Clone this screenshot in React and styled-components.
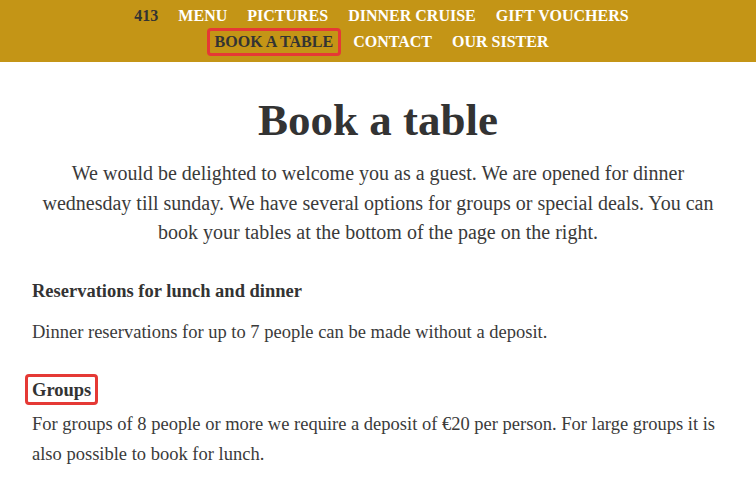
import React from "react";
import styled, { createGlobalStyle } from "styled-components";

const Global = createGlobalStyle`
  body {
    margin: 0;
    background: #fff;
    font-family: "Liberation Serif", "DejaVu Serif", serif;
    color: #3a3a3a;
  }
`;

const Header = styled.header`
  background: #c49516;
  height: 62px;
  box-sizing: border-box;
  padding: 0 0 4px 7px;
  display: flex;
  flex-direction: column;
  align-items: center;
  justify-content: center;
`;

const NavRow = styled.ul`
  list-style: none;
  margin: 0;
  padding: 0;
  display: flex;
  gap: 20px;
  height: 26px;
  align-items: center;
`;

const NavItem = styled.li`
  font-size: 16px;
  font-weight: bold;
  text-transform: uppercase;
  color: ${(p) => (p.dark ? "#333" : "#fff")};
  padding: ${(p) => (p.boxed ? "2px 5px" : "0")};
  margin: ${(p) => (p.boxed ? "0 -8px" : "0")};
  border: ${(p) => (p.boxed ? "3px solid #e53935" : "none")};
  border-radius: 4px;
`;

const Main = styled.main`
  padding: 0 32px;
`;

const Title = styled.h1`
  margin: 32px 0 0;
  text-align: center;
  font-size: 45px;
  line-height: 52px;
  font-weight: bold;
  color: #333;
`;

const Lead = styled.p`
  margin: 13px 0 0;
  text-align: center;
  font-size: 20px;
  line-height: 29.5px;
`;

const Heading = styled.h3`
  display: inline-block;
  margin: ${(p) => (p.boxed ? "0 0 0 -7px" : "0")};
  padding: ${(p) => (p.boxed ? "2px 4px 1px" : "0")};
  border: ${(p) => (p.boxed ? "3px solid #e53935" : "none")};
  border-radius: 4px;
  font-size: 18.5px;
  font-weight: bold;
  line-height: 22px;
  color: #333;
`;

const Section = styled.section`
  margin-top: ${(p) => p.top}px;
`;

const Text = styled.p`
  margin: ${(p) => p.top}px 0 0;
  font-size: 18.5px;
  line-height: 30px;
`;

export default function App() {
  return (
    <>
      <Global />
      <Header>
        <NavRow>
          <NavItem dark>413</NavItem>
          <NavItem>Menu</NavItem>
          <NavItem>Pictures</NavItem>
          <NavItem>Dinner cruise</NavItem>
          <NavItem>Gift vouchers</NavItem>
        </NavRow>
        <NavRow>
          <NavItem dark boxed>Book a table</NavItem>
          <NavItem>Contact</NavItem>
          <NavItem>Our sister</NavItem>
        </NavRow>
      </Header>
      <Main>
        <Title>Book a table</Title>
        <Lead>
          We would be delighted to welcome you as a guest. We are opened for
          dinner wednesday till sunday. We have several options for groups or
          special deals. You can book your tables at the bottom of the page on
          the right.
        </Lead>
        <Section top={32}>
          <Heading>Reservations for lunch and dinner</Heading>
          <Text top={15}>
            Dinner reservations for up to 7 people can be made without a deposit.
          </Text>
        </Section>
        <Section top={27}>
          <Heading boxed>Groups</Heading>
          <Text top={4}>
            For groups of 8 people or more we require a deposit of €20 per
            person. For large groups it is also possible to book for lunch.
          </Text>
        </Section>
      </Main>
    </>
  );
}
